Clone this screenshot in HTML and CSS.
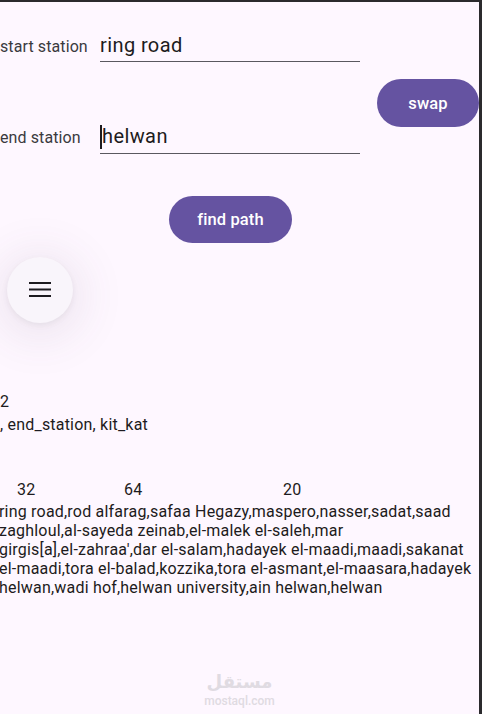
FILE: index.html
```html
<!doctype html>
<html lang="en">
<head>
    <meta charset="UTF-8">
    <meta name="viewport" content="width=device-width, initial-scale=1.0">
    <title>Metro</title>
    <link rel="stylesheet" href="styles.css">
</head>
<body>
<div class="screen">
    <div class="form">
        <div class="fields">
            <div class="field">
                <span class="label">start station</span>
                <div class="input">ring road</div>
            </div>
            <div class="field field-end">
                <span class="label">end station</span>
                <div class="input"><span class="caret"></span>helwan</div>
            </div>
        </div>
        <button class="btn btn-swap">swap</button>
    </div>

    <button class="btn btn-find">find path</button>

    <button class="fab" aria-label="menu">
        <svg width="22" height="16" viewBox="0 0 22 16">
            <path d="M0 1h22M0 7.5h22M0 14h22" stroke="#1d1b20" stroke-width="2"/>
        </svg>
    </button>

    <div class="result">
        <p class="count">2</p>
        <p class="transfer">, end_station, kit_kat</p>
        <div class="numbers">
            <span>32</span>
            <span>64</span>
            <span>20</span>
        </div>
        <p class="route">
            ring road,rod alfarag,safaa Hegazy,maspero,nasser,sadat,saad<br>
            zaghloul,al-sayeda zeinab,el-malek el-saleh,mar<br>
            girgis[a],el-zahraa',dar el-salam,hadayek el-maadi,maadi,sakanat<br>
            el-maadi,tora el-balad,kozzika,tora el-asmant,el-maasara,hadayek<br>
            helwan,wadi hof,helwan university,ain helwan,helwan
        </p>
    </div>

    <div class="watermark">
        <span class="wm-ar">مستقل</span>
        <span class="wm-en">mostaql.com</span>
    </div>
</div>
</body>
</html>
```

FILE: styles.css
```css
* {
    padding: 0;
    margin: 0;
    box-sizing: border-box;
}

html, body {
    width: 100%;
    height: 100%;
    overflow: hidden;
    background-color: #2b2a2d;
}

body {
    font-family: Roboto, "Noto Sans", sans-serif;
    color: #1d1b20;
}

.screen {
    width: 479px;
    height: 712px;
    margin-top: 2px;
    background-color: #fef7ff;
    display: flex;
    flex-direction: column;
    align-items: flex-start;
}

.form {
    display: flex;
    align-items: flex-start;
    padding-top: 31px;
}

.fields {
    width: 377px;
}

.field {
    display: flex;
    align-items: baseline;
}

.field-end {
    margin-top: 62px;
}

.label {
    width: 100px;
    font-size: 16px;
    letter-spacing: 0.1px;
    color: #3a3a3e;
}

.input {
    width: 260px;
    font-size: 20px;
    letter-spacing: 0.4px;
    line-height: 24px;
    padding-bottom: 4px;
    border-bottom: 1.5px solid #5a5860;
    color: #1d1b20;
}

.caret {
    display: inline-block;
    width: 1.5px;
    height: 24px;
    margin-right: 0.5px;
    vertical-align: -6px;
    background-color: #1d1b20;
}

.btn {
    border: none;
    border-radius: 24px;
    background-color: #6553a1;
    color: #fff;
    font-family: Roboto, sans-serif;
    font-size: 16.5px;
    font-weight: 500;
    letter-spacing: 0.1px;
    height: 48px;
}

.btn-swap {
    width: 102px;
    margin-top: 46px;
}

.btn-find {
    width: 123px;
    height: 47px;
    margin-top: 42px;
    margin-left: 169px;
}

.fab {
    width: 66px;
    height: 66px;
    margin-top: 14px;
    margin-left: 7px;
    border: none;
    border-radius: 50%;
    background-color: #f9f5fb;
    box-shadow: 0 6px 46px 10px rgba(90, 70, 100, 0.10), 0 2px 6px rgba(0, 0, 0, 0.06);
    display: flex;
    align-items: center;
    justify-content: center;
}

.result {
    margin-top: 69px;
    font-size: 16px;
    line-height: 19.2px;
    letter-spacing: 0.2px;
    color: #1d1b20;
}

.transfer {
    margin-top: 4px;
}

.numbers {
    display: grid;
    grid-template-columns: 107px 159px auto;
    padding-left: 17px;
    margin-top: 46px;
}

.route {
    white-space: nowrap;
    margin-top: 2px;
    margin-left: -1px;
}

.watermark {
    margin-top: auto;
    align-self: center;
    display: flex;
    flex-direction: column;
    align-items: center;
    gap: 2px;
    padding-bottom: 7px;
    color: #e0dbe2;
}

.wm-ar {
    font-family: "DejaVu Sans", sans-serif;
    font-size: 18px;
    font-weight: bold;
    line-height: 22px;
}

.wm-en {
    font-family: Roboto, sans-serif;
    font-size: 12px;
    font-weight: 500;
    line-height: 12px;
}
```
